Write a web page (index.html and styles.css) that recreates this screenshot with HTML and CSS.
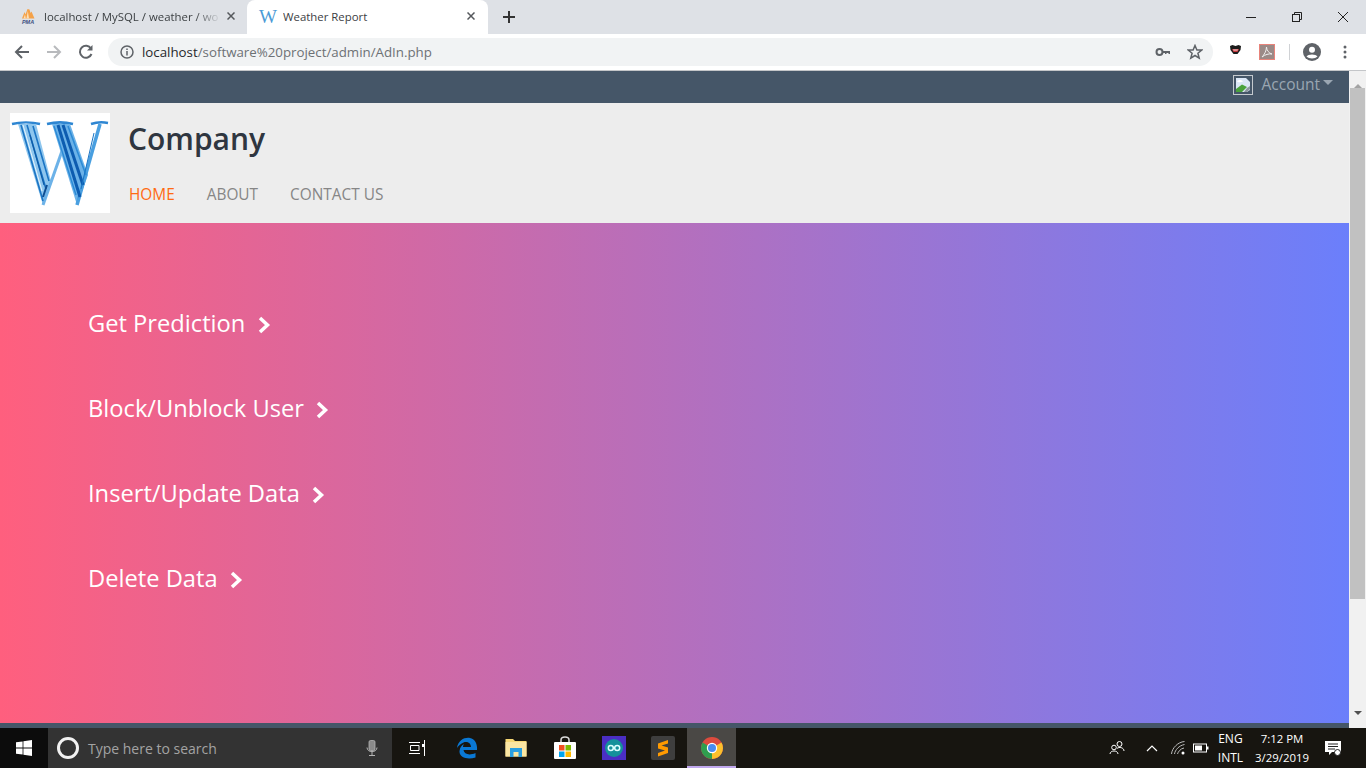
FILE: index.html
```html
<!DOCTYPE html>
<html lang="en">
<head>
  <meta charset="UTF-8">
  <title>Weather Report</title>
  <link rel="stylesheet" href="styles.css">
</head>
<body>
  <div class="tabstrip">
    <div class="tab">
      <svg class="tab-icon" viewBox="0 0 16 16" width="16" height="16">
        <path d="M2 10.500L4.500 4L5.500 6.500L7.500 1L9.500 1.500L10.500 5L11.500 3.500L14.500 10.500Z" fill="#f4a24a"/>
        <path d="M6.500 10.500L7.800 3L9 10.500ZM3.500 10.500L5 6.500L5.800 10.500Z" fill="#fde0b8"/>
        <text x="8" y="15.500" class="pma">PMA</text>
      </svg>
      <span class="tab-title fade">localhost / MySQL / weather / wo</span>
      <span class="tab-close"><svg viewBox="0 0 8 8" width="8" height="8"><path d="M0.500 0.500L7.500 7.500M7.500 0.500L0.500 7.500" stroke="#55585c" stroke-width="1.500"/></svg></span>
    </div>
    <div class="tab active">
      <span class="tab-w">W</span>
      <span class="tab-title">Weather Report</span>
      <span class="tab-close"><svg viewBox="0 0 8 8" width="8" height="8"><path d="M0.500 0.500L7.500 7.500M7.500 0.500L0.500 7.500" stroke="#55585c" stroke-width="1.500"/></svg></span>
    </div>
    <svg class="newtab" viewBox="0 0 12 12" width="12" height="12"><path d="M6 0V12M0 6H12" stroke="#333" stroke-width="2"/></svg>
    <div class="window-btns">
      <svg viewBox="0 0 12 12" width="12" height="12"><path d="M1 6.500H11" stroke="#222" stroke-width="1"/></svg>
      <svg viewBox="0 0 12 12" width="12" height="12" fill="none" stroke="#222"><path d="M3.500 3V1.500H10.500V8.500H8.500"/><rect x="1.500" y="3.500" width="7" height="7"/></svg>
      <svg viewBox="0 0 12 12" width="12" height="12"><path d="M1 1L11 11M11 1L1 11" stroke="#222" stroke-width="1"/></svg>
    </div>
  </div>

  <div class="toolbar">
    <svg class="nav-icon" viewBox="0 0 16 16" width="16" height="16"><path d="M15 8H2M8 2L2 8L8 14" fill="none" stroke="#5f6368" stroke-width="2"/></svg>
    <svg class="nav-icon" viewBox="0 0 16 16" width="16" height="16"><path d="M1 8H14M8 2L14 8L8 14" fill="none" stroke="#b8babd" stroke-width="2"/></svg>
    <svg class="nav-icon" viewBox="0 0 16 16" width="16" height="16"><path d="M13.500 10A6 6 0 1 1 13 4.500" fill="none" stroke="#5f6368" stroke-width="2"/><path d="M14.500 1V6.500H9Z" fill="#5f6368"/></svg>
    <div class="omnibox">
      <svg viewBox="0 0 14 14" width="14" height="14"><circle cx="7" cy="7" r="6" fill="none" stroke="#5f6368" stroke-width="1.500"/><path d="M7 6V10.500M7 3.500V5" stroke="#5f6368" stroke-width="1.500"/></svg>
      <span class="url"><b>localhost</b>/software%20project/admin/AdIn.php</span>
      <svg class="omni-right" viewBox="0 0 16 16" width="16" height="16"><circle cx="4.500" cy="8" r="3" fill="none" stroke="#5f6368" stroke-width="2"/><path d="M7 7H15V10H13.500V9H11.500V10H10V9H7Z" fill="#5f6368"/></svg>
      <svg viewBox="0 0 16 16" width="16" height="16"><path d="M8 1.500L9.900 6H14.800L10.900 9.200L12.200 14.200L8 11.500L3.800 14.200L5.100 9.200L1.200 6H6.100Z" fill="none" stroke="#5f6368" stroke-width="1.500"/></svg>
    </div>
    <div class="ext-icons">
      <svg class="ext-shield" viewBox="0 0 11 9" width="11" height="9"><path d="M0 1L2.500 0L5.500 1L8.500 0L11 1L10.500 5L7.500 9H3.500L0.500 5Z" fill="#1c1c1c"/><path d="M2 4H9L7.500 7H3.500Z" fill="#c9343a"/><path d="M3 4.500H8L7.500 5.500H3.500Z" fill="#f2e6e6"/></svg>
      <svg class="ext-pdf" viewBox="0 0 16 16" width="16" height="16"><rect x="0.500" y="0.500" width="15" height="15" fill="#9b8a87" stroke="#e8837a"/><path d="M3 13C5 11 7.500 7 7.500 3C7.500 6 10 9.500 13 10C10 9.500 6 10.500 3 13Z" fill="none" stroke="#eee" stroke-width="1"/></svg>
      <span class="ext-sep"></span>
      <svg viewBox="0 0 18 18" width="18" height="18"><circle cx="9" cy="9" r="9" fill="#5f6368"/><circle cx="9" cy="6.800" r="3" fill="#fff"/><path d="M3.500 13.500C5 10.800 13 10.800 14.500 13.500C12 16 6 16 3.500 13.500Z" fill="#fff"/></svg>
      <svg viewBox="0 0 4 14" width="4" height="14"><circle cx="2" cy="2" r="1.500" fill="#5f6368"/><circle cx="2" cy="7" r="1.500" fill="#5f6368"/><circle cx="2" cy="12" r="1.500" fill="#5f6368"/></svg>
    </div>
  </div>

  <div class="viewport">
    <div class="page">
      <nav class="topbar">
        <svg class="broken-img" viewBox="0 0 20 20" width="20" height="20">
          <rect x="0.500" y="0.500" width="19" height="19" fill="#455668" stroke="#c4c9ce"/>
          <path d="M3 3H13L17 7V15L14 17H3Z" fill="#dbe7f6"/>
          <path d="M4 6.500C5 4.500 9 4.500 10 6.500C8 7.500 5 7.500 4 6.500Z" fill="#fff"/>
          <path d="M3 17V14L9 9.500L14 12L9 17Z" fill="#4aa23c"/>
          <path d="M14 13L17 11V14L14 17H11Z" fill="#8d979f"/>
        </svg>
        <span class="account">Account</span>
        <span class="caret"></span>
      </nav>

      <header class="site-header">
        <div class="logo">
          <svg viewBox="0 0 100 100" width="100" height="100">
            <defs>
              <filter id="soft" x="-5%" y="-5%" width="110%" height="110%"><feGaussianBlur stdDeviation="0.500"/></filter>
            </defs>
            <g filter="url(#soft)" fill="none">
              <path d="M2 11C10 9 22 9 30 11M37 11C45 9 55 9 63 11M81 11C87 9 93 9 98 10" stroke="#2f86d2" stroke-width="2.500"/>
              <path d="M8 11H26L41 68L33 92Z" fill="#8ec6ee"/>
              <path d="M42 11H60L78 62L67 92Z" fill="#6cb2e8"/>
              <path d="M33 92L52 38" stroke="#6cb2e8" stroke-width="3"/>
              <path d="M67 92L90 11" stroke="#4a9fe0" stroke-width="3.500"/>
              <path d="M11 12L33 88M17 12L36 76M23 13L39 68" stroke="#1a74c4" stroke-width="1.600"/>
              <path d="M13 12L32 78" stroke="#e6f4fc" stroke-width="1"/>
              <path d="M20 22L34 72" stroke="#0f5ca8" stroke-width="1.200"/>
              <path d="M48 12L70 84M53 12L73 72" stroke="#0a5cb0" stroke-width="3"/>
              <path d="M58 13L76 62" stroke="#2d8bd6" stroke-width="1.600"/>
              <path d="M44 13L66 82" stroke="#2a8ad6" stroke-width="1.400"/>
              <path d="M33 84L37 72" stroke="#0c4d92" stroke-width="2"/>
              <path d="M84 20L71 76" stroke="#1a74c4" stroke-width="1"/>
            </g>
          </svg>
        </div>
        <div class="brand">
          <h1 class="company">Company</h1>
          <ul class="menu">
            <li class="current">HOME</li>
            <li>ABOUT</li>
            <li>CONTACT US</li>
          </ul>
        </div>
      </header>

      <main class="hero">
        <a class="hero-link">Get Prediction <svg class="chev" viewBox="0 0 14 20" width="14" height="20"><path d="M3 3L10.500 10L3 17" fill="none" stroke="#fff" stroke-width="3.500"/></svg></a>
        <a class="hero-link">Block/Unblock User <svg class="chev" viewBox="0 0 14 20" width="14" height="20"><path d="M3 3L10.500 10L3 17" fill="none" stroke="#fff" stroke-width="3.500"/></svg></a>
        <a class="hero-link">Insert/Update Data <svg class="chev" viewBox="0 0 14 20" width="14" height="20"><path d="M3 3L10.500 10L3 17" fill="none" stroke="#fff" stroke-width="3.500"/></svg></a>
        <a class="hero-link">Delete Data <svg class="chev" viewBox="0 0 14 20" width="14" height="20"><path d="M3 3L10.500 10L3 17" fill="none" stroke="#fff" stroke-width="3.500"/></svg></a>
      </main>
      <div class="page-foot"></div>
    </div>

    <div class="scrollbar">
      <span class="arrow up"></span>
      <div class="track"><div class="thumb"></div></div>
      <span class="arrow down"></span>
    </div>
  </div>

  <footer class="taskbar">
    <div class="start">
      <svg viewBox="0 0 16 16" width="16" height="16"><path d="M0 2.300L6.600 1.400V7.600H0ZM7.400 1.300L16 0V7.600H7.400ZM0 8.400H6.600V14.600L0 13.700ZM7.400 8.400H16V16L7.400 14.700Z" fill="#fff"/></svg>
    </div>
    <div class="search">
      <span class="cortana"></span>
      <span class="search-text">Type here to search</span>
      <svg class="mic" viewBox="0 0 12 16" width="12" height="16"><rect x="3" y="0.500" width="6" height="10" rx="1.500" fill="#8a8a8a" stroke="#b5b5b5" stroke-width="0.800"/><path d="M1 7.500C1 13 11 13 11 7.500M6 12V15M3 15.500H9" fill="none" stroke="#b5b5b5"/></svg>
    </div>
    <div class="task-icons">
      <div class="task-item">
        <svg viewBox="0 0 18 16" width="18" height="16" fill="none" stroke="#fff"><path d="M0 2.500H11M0 13.500H11M1.500 5.500H10V10.500H1.500ZM15.500 0V16"/><rect x="13" y="4" width="3" height="3" fill="#fff" stroke="none"/></svg>
      </div>
      <div class="task-item">
        <svg viewBox="0 0 22 22" width="22" height="22"><path d="M1 11C2 3 9 0 14 1C19 2 21.500 7 21 13H7.500C8 17 13 19 19.500 16V20.500C12 23 3 21 3.500 14C4 10 6 8 8 7C7 8.500 7 9.500 7 10H15C15 6 11 4 7.500 5.500C5 6.500 2.500 8.500 1 11Z" fill="#0a78d4"/></svg>
      </div>
      <div class="task-item">
        <svg viewBox="0 0 22 20" width="22" height="20"><path d="M0.500 1H8L10 3H21.500V18.500H0.500Z" fill="#f7d774"/><path d="M0.500 4H21.500V18.500H0.500Z" fill="#fbe6a2"/><path d="M5 19V10H17V19H13.500V14H8.500V19Z" fill="#2a9fe0"/></svg>
      </div>
      <div class="task-item">
        <svg viewBox="0 0 24 24" width="24" height="24"><path d="M8 7V4C8 0 16 0 16 4V7" fill="none" stroke="#ddd" stroke-width="1.500"/><rect x="1" y="6" width="22" height="17" rx="1" fill="#fff"/><rect x="6" y="9" width="5.500" height="5.500" fill="#f25022"/><rect x="12.500" y="9" width="5.500" height="5.500" fill="#7fba00"/><rect x="6" y="15.500" width="5.500" height="5.500" fill="#00a4ef"/><rect x="12.500" y="15.500" width="5.500" height="5.500" fill="#ffb900"/></svg>
      </div>
      <div class="task-item">
        <svg viewBox="0 0 24 24" width="24" height="24"><rect width="24" height="24" fill="#4a2ec4"/><circle cx="12" cy="12" r="9" fill="#14919b"/><g fill="none" stroke="#dff" stroke-width="1.500"><circle cx="8.800" cy="12" r="2.500"/><circle cx="15.200" cy="12" r="2.500"/></g></svg>
      </div>
      <div class="task-item">
        <svg viewBox="0 0 24 24" width="24" height="24"><rect width="24" height="24" rx="2" fill="#3e3e3e"/><path d="M17 4L7 7.500V12.500L14 14.500L7 17V20.500L17 17V11.500L10.500 9.500L17 7.500Z" fill="#ff9a00"/></svg>
      </div>
      <div class="task-item running">
        <svg viewBox="0 0 24 24" width="24" height="24"><circle cx="12" cy="12" r="11" fill="#dd4b3e"/><path d="M12 12L21.500 6.500A11 11 0 0 1 12 23Z" fill="#fbc02d"/><path d="M12 12L12 23A11 11 0 0 1 2.500 6.500Z" fill="#2f9e4f"/><circle cx="12" cy="12" r="5.200" fill="#fff"/><circle cx="12" cy="12" r="4" fill="#4a8cf0"/></svg>
      </div>
    </div>
    <div class="tray">
      <svg class="tray-people" viewBox="0 0 16 16" width="16" height="16" fill="none" stroke="#fff"><circle cx="10.500" cy="4" r="2.500"/><circle cx="5" cy="7.500" r="2.300"/><path d="M1 14C1 10 9 10 9 14M8 8.500C10 6.500 15 7.500 15 11"/></svg>
      <svg class="tray-chev" viewBox="0 0 12 8" width="12" height="8"><path d="M1 7L6 2L11 7" fill="none" stroke="#fff" stroke-width="1.200"/></svg>
      <svg class="tray-wifi" viewBox="0 0 14 14" width="14" height="14" fill="none" stroke="#bbb"><path d="M0.500 13C1 7 7 1 13.500 0.500M3.500 13C4 9 8 4.500 13.500 3.500M6.500 13C7 11 9.500 7.500 13 7"/><circle cx="12" cy="12" r="1.500" fill="#fff" stroke="none"/></svg>
      <svg class="tray-batt" viewBox="0 0 16 10" width="16" height="10"><rect x="0.500" y="1" width="13" height="8" fill="none" stroke="#fff"/><rect x="2" y="2.500" width="7" height="5" fill="#fff"/><rect x="14" y="3.500" width="1.500" height="3" fill="#fff"/></svg>
      <div class="tray-lang"><span>ENG</span><span>INTL</span></div>
      <div class="tray-clock"><span>7:12 PM</span><span>3/29/2019</span></div>
      <svg class="tray-note" viewBox="0 0 16 15" width="16" height="15"><path d="M0 0H16V11H7L4 14V11H0Z" fill="#fff"/><path d="M3 3H13M3 5.500H13M3 8H10" stroke="#222"/><circle cx="12.500" cy="11.500" r="3" fill="#fff" stroke="#222"/></svg>
    </div>
  </footer>
</body>
</html>
```

FILE: styles.css
```css
html, body {
  margin: 0;
  padding: 0;
  height: 100%;
  overflow: hidden;
}

body {
  font-family: 'Open Sans', 'Noto Sans', sans-serif;
  display: flex;
  flex-direction: column;
  width: 1366px;
  height: 768px;
}

svg {
  display: block;
  flex: none;
}

/* browser tabs */
.tabstrip {
  height: 34px;
  background: #dee1e6;
  display: flex;
  align-items: flex-end;
  padding-left: 8px;
  flex: none;
}

.tab {
  width: 239px;
  height: 34px;
  display: flex;
  align-items: center;
  padding: 0 6px 2px 12px;
  box-sizing: border-box;
  font-size: 11.4px;
  color: #3c4043;
  white-space: nowrap;
}

.tab.active {
  background: #fff;
  border-radius: 8px 8px 0 0;
  width: 241px;
  padding-right: 7px;
  color: #3c4043;
}

.tab-icon {
  margin-right: 8px;
}

.pma {
  font-family: 'Liberation Sans', sans-serif;
  font-size: 5.5px;
  font-weight: 700;
  font-style: italic;
  text-anchor: middle;
  fill: #3d4f80;
}

.tab-w {
  font-family: 'Liberation Serif', serif;
  font-size: 19px;
  color: #4a9bd6;
  width: 16px;
  margin-right: 8px;
  line-height: 1;
}

.tab-title {
  flex: 1;
  min-width: 0;
  overflow: hidden;
}

.tab-title.fade {
  -webkit-mask-image: linear-gradient(to right, #000 85%, transparent);
  mask-image: linear-gradient(to right, #000 85%, transparent);
}

.tab-close {
  width: 20px;
  display: flex;
  justify-content: center;
}

.newtab {
  margin: 0 0 11px 15px;
}

.window-btns {
  margin-left: auto;
  display: flex;
  gap: 34px;
  padding: 0 17px 11px 0;
}

/* address bar */
.toolbar {
  height: 36px;
  background: #fff;
  border-bottom: 1px solid #c4c6c9;
  display: flex;
  align-items: center;
  padding-left: 14px;
  gap: 16px;
  flex: none;
}

.omnibox {
  width: 1105px;
  height: 28px;
  border-radius: 14px;
  background: #f1f3f4;
  display: flex;
  align-items: center;
  padding: 0 10px 0 12px;
  box-sizing: border-box;
  margin-left: -2px;
}

.url {
  margin-left: 8px;
  font-size: 13.3px;
  color: #6d7175;
  flex: 1;
}

.url b {
  font-weight: 400;
  color: #26282b;
}

.omni-right {
  margin-right: 16px;
}

.ext-icons {
  display: flex;
  align-items: center;
  margin-left: 1px;
}

.ext-shield {
  margin-right: 18px;
  margin-bottom: 5px;
}

.ext-sep {
  width: 1px;
  height: 16px;
  background: #d0d2d5;
  margin: 0 13px 0 14px;
}

.ext-icons svg:last-child {
  margin-left: 22px;
}

/* page */
.viewport {
  flex: 1;
  display: flex;
  min-height: 0;
}

.page {
  flex: 1;
  display: flex;
  flex-direction: column;
}

.topbar {
  height: 32px;
  background: #455668;
  display: flex;
  align-items: center;
  justify-content: flex-end;
  padding-right: 16px;
  flex: none;
}

.broken-img {
  margin-right: 8px;
  margin-bottom: 4px;
}

.account {
  font-size: 15.5px;
  color: #9aa6b2;
  margin-bottom: 6px;
}

.caret {
  margin-left: 3px;
  margin-bottom: 10px;
  border-top: 5px solid #9aa6b2;
  border-left: 5px solid transparent;
  border-right: 5px solid transparent;
}

.site-header {
  height: 120px;
  background: #ededed;
  display: flex;
  padding: 10px 0 0 10px;
  box-sizing: border-box;
  flex: none;
}

.logo {
  width: 100px;
  height: 100px;
  background: #fff;
}

.brand {
  margin-left: 18px;
}

.company {
  margin: 6px 0 0;
  font-size: 30px;
  font-weight: 600;
  line-height: 40px;
  color: #2f3640;
}

.menu {
  list-style: none;
  margin: 26px 0 0 1px;
  padding: 0;
  display: flex;
  gap: 32px;
  font-size: 15.4px;
  line-height: 20px;
  color: #868686;
}

.menu .current {
  color: #ff6a13;
}

.hero {
  height: 500px;
  flex: none;
  background: linear-gradient(to right, #ff5f7e, #6b7ffb);
  padding: 80px 0 0 88px;
  box-sizing: border-box;
  display: flex;
  flex-direction: column;
  gap: 45px;
}

.hero-link {
  display: flex;
  align-items: center;
  height: 40px;
  font-size: 23.7px;
  color: #fff;
  white-space: pre;
}

.chev {
  margin-left: 5px;
  margin-top: 3px;
}

.page-foot {
  flex: 1;
  background: #455668;
}

.scrollbar {
  width: 17px;
  background: #f1f1f1;
  display: flex;
  flex-direction: column;
  align-items: center;
  flex: none;
}

.track {
  flex: 1;
  width: 100%;
}

.thumb {
  height: 511px;
  background: #c1c1c1;
  margin: 0 1px;
}

.arrow {
  height: 17px;
  width: 0;
  box-sizing: border-box;
  border-left: 4px solid transparent;
  border-right: 4px solid transparent;
}

.arrow.up {
  border-bottom: 4px solid #a3a3a3;
  border-top: 6px solid transparent;
}

.arrow.down {
  border-top: 4px solid #505050;
  border-bottom: 6px solid transparent;
}

/* windows taskbar */
.taskbar {
  height: 40px;
  background: #171510;
  display: flex;
  align-items: center;
  color: #fff;
  flex: none;
}

.start {
  width: 48px;
  height: 40px;
  background: #0c0c0c;
  display: flex;
  align-items: center;
  justify-content: center;
}

.search {
  width: 344px;
  height: 40px;
  background: #333;
  display: flex;
  align-items: center;
  padding-left: 9px;
  box-sizing: border-box;
}

.cortana {
  width: 22px;
  height: 22px;
  box-sizing: border-box;
  border: 3px solid #f2f2f2;
  border-radius: 50%;
}

.search-text {
  margin-left: 9px;
  font-size: 14px;
  color: #a3a3a3;
  flex: 1;
}

.mic {
  margin-right: 14px;
}

.task-icons {
  display: flex;
  height: 40px;
  margin-left: 1px;
}

.task-item {
  width: 49px;
  height: 40px;
  display: flex;
  align-items: center;
  justify-content: center;
  box-sizing: border-box;
}

.task-item.running {
  background: #4a4845;
  border-bottom: 2px solid #c0a8ee;
  padding-top: 2px;
}

.tray {
  margin-left: auto;
  display: flex;
  align-items: center;
  padding-right: 25px;
}

.tray-people {
  margin-right: 21px;
}

.tray-chev {
  margin-right: 13px;
}

.tray-wifi {
  margin-right: 8px;
}

.tray-batt {
  margin-right: 9px;
}

.tray-lang, .tray-clock {
  display: flex;
  flex-direction: column;
  align-items: center;
  font-size: 12px;
  line-height: 19px;
}

.tray-clock {
  margin: 0 16px 0 12px;
  font-size: 11.4px;
}
```
